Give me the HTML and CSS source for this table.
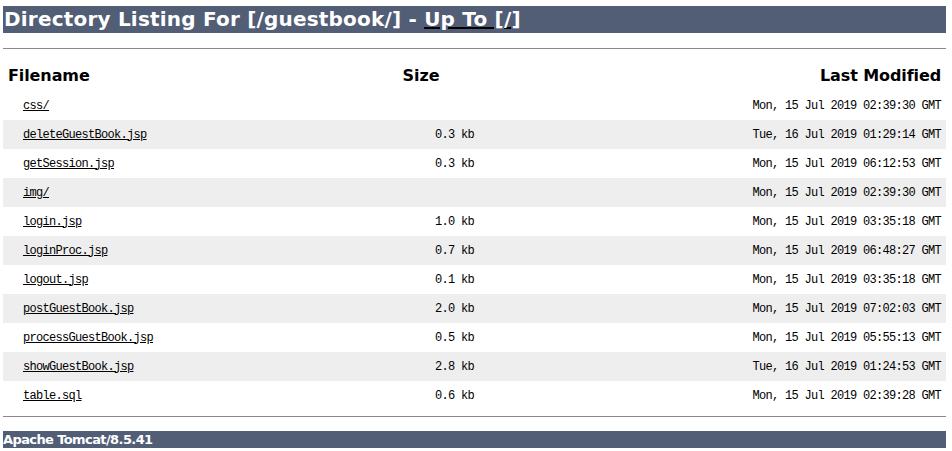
FILE: index.html
```html
<!DOCTYPE html>
<html>
<head>
<meta charset="utf-8">
<title>Directory Listing For [/guestbook/]</title>
<link rel="stylesheet" href="styles.css">
</head>
<body>
<h1 class="title">Directory Listing For [/guestbook/] - <a href="/">Up To [/]</a></h1>
<hr class="rule top">
<table class="listing">
  <colgroup><col class="c-name"><col class="c-size"><col class="c-date"></colgroup>
  <tr class="head">
    <td class="left">Filename</td>
    <td class="center">Size</td>
    <td class="right">Last Modified</td>
  </tr>
  <tr>
    <td class="left file"><a href="#">css/</a></td>
    <td class="right mono"></td>
    <td class="right mono">Mon, 15 Jul 2019 02:39:30 GMT</td>
  </tr>
  <tr class="alt">
    <td class="left file"><a href="#">deleteGuestBook.jsp</a></td>
    <td class="right mono">0.3 kb</td>
    <td class="right mono">Tue, 16 Jul 2019 01:29:14 GMT</td>
  </tr>
  <tr>
    <td class="left file"><a href="#">getSession.jsp</a></td>
    <td class="right mono">0.3 kb</td>
    <td class="right mono">Mon, 15 Jul 2019 06:12:53 GMT</td>
  </tr>
  <tr class="alt">
    <td class="left file"><a href="#">img/</a></td>
    <td class="right mono"></td>
    <td class="right mono">Mon, 15 Jul 2019 02:39:30 GMT</td>
  </tr>
  <tr>
    <td class="left file"><a href="#">login.jsp</a></td>
    <td class="right mono">1.0 kb</td>
    <td class="right mono">Mon, 15 Jul 2019 03:35:18 GMT</td>
  </tr>
  <tr class="alt">
    <td class="left file"><a href="#">loginProc.jsp</a></td>
    <td class="right mono">0.7 kb</td>
    <td class="right mono">Mon, 15 Jul 2019 06:48:27 GMT</td>
  </tr>
  <tr>
    <td class="left file"><a href="#">logout.jsp</a></td>
    <td class="right mono">0.1 kb</td>
    <td class="right mono">Mon, 15 Jul 2019 03:35:18 GMT</td>
  </tr>
  <tr class="alt">
    <td class="left file"><a href="#">postGuestBook.jsp</a></td>
    <td class="right mono">2.0 kb</td>
    <td class="right mono">Mon, 15 Jul 2019 07:02:03 GMT</td>
  </tr>
  <tr>
    <td class="left file"><a href="#">processGuestBook.jsp</a></td>
    <td class="right mono">0.5 kb</td>
    <td class="right mono">Mon, 15 Jul 2019 05:55:13 GMT</td>
  </tr>
  <tr class="alt">
    <td class="left file"><a href="#">showGuestBook.jsp</a></td>
    <td class="right mono">2.8 kb</td>
    <td class="right mono">Tue, 16 Jul 2019 01:24:53 GMT</td>
  </tr>
  <tr>
    <td class="left file"><a href="#">table.sql</a></td>
    <td class="right mono">0.6 kb</td>
    <td class="right mono">Mon, 15 Jul 2019 02:39:28 GMT</td>
  </tr>
</table>
<hr class="rule bottom">
<h3 class="footer">Apache Tomcat/8.5.41</h3>
</body>
</html>
```
FILE: styles.css
```css
html, body {
  background: #fff;
}
body {
  margin: 6px 6px 0 3px;
  font-family: "DejaVu Sans", Tahoma, Arial, sans-serif;
  color: #000;
}
.title {
  margin: 0;
  height: 27px;
  line-height: 27px;
  background: #525D76;
  color: #fff;
  font-size: 20px;
  font-weight: bold;
  padding-left: 1px;
  white-space: nowrap;
  letter-spacing: 0.2px;
}
.title a {
  color: #fff;
  text-decoration: underline;
  text-decoration-color: #000;
}
.rule {
  border: 0;
  height: 1px;
  background: #8a8a8a;
  margin: 0;
}
.rule.top {
  margin-top: 15px;
}
.rule.bottom {
  margin-top: 6px;
}
.listing {
  width: 100%;
  border-collapse: collapse;
  margin-top: 10px;
  table-layout: fixed;
}
.c-name { width: 360px; }
.c-size { width: 116px; }
.listing td {
  padding: 0 5px;
  height: 29px;
  vertical-align: middle;
}
.listing tr.head td {
  height: 32px;
  font-size: 16px;
  font-weight: bold;
  letter-spacing: -0.1px;
}
.listing tr.alt {
  background: #eeeeee;
}
.left { text-align: left; }
.center { text-align: center; }
.right { text-align: right; }
.mono, .file {
  font-family: "Liberation Mono", "DejaVu Sans Mono", monospace;
  font-size: 12px;
  letter-spacing: -0.7px;
  white-space: nowrap;
}
.file {
  padding-left: 20px !important;
}
.file a {
  color: #000;
  text-decoration: underline;
}
.footer {
  margin: 14px 0 0 0;
  height: 17px;
  line-height: 17px;
  background: #525D76;
  color: #fff;
  font-size: 13px;
  font-weight: bold;
  letter-spacing: -0.6px;
}
```
